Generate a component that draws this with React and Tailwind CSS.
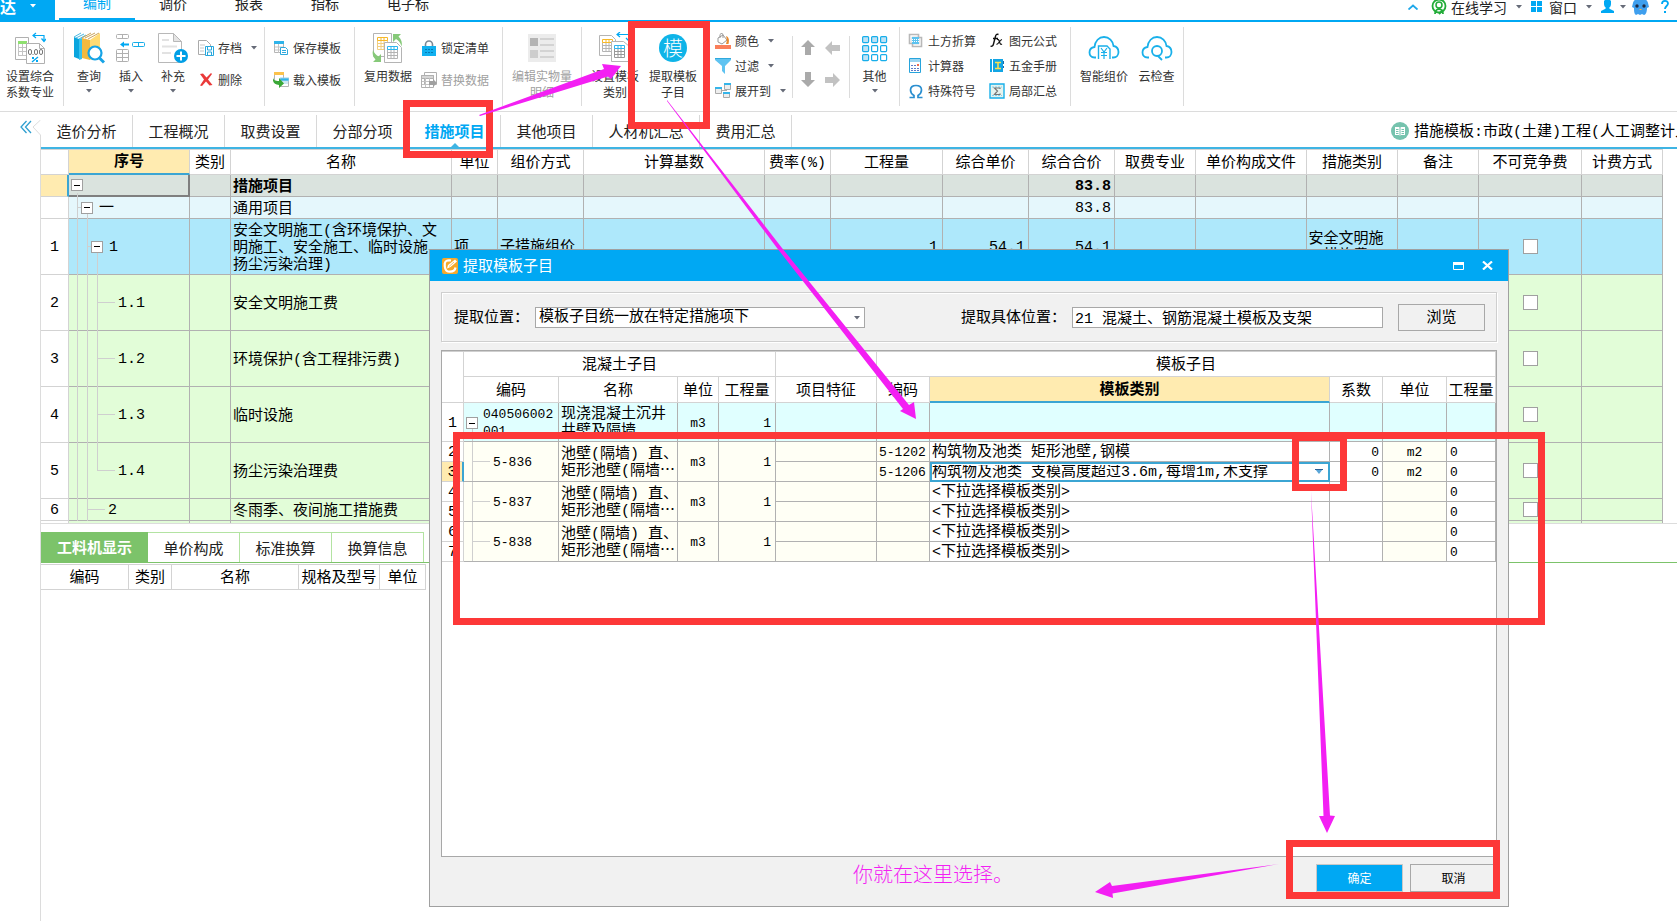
import React from "react";

const SONG = "font-['Liberation_Mono','Noto_Sans_CJK_SC',monospace]";

/* ---------- small shapes ---------- */

const Caret = ({ className = "" }) => (
  <svg width="6" height="4" viewBox="0 0 6 4" className={`shrink-0 ${className}`}>
    <path d="M0 0h6L3 3.6z" fill="currentColor" />
  </svg>
);

const RibbonDivider = () => <span className="my-[5px] w-px shrink-0 bg-[#dcdcdc]" />;
const ShortDivider = () => <span className="mt-[14px] mb-[13px] w-px shrink-0 bg-[#dcdcdc]" />;

/* ---------- ribbon icons, 32px ---------- */

const GridLines = ({ x, y, c = "#b4b4b4", head = "#b4b4b4", fill = "#fff" }) => (
  <g fill={fill} stroke={c}>
    <path d={`M${x} ${y + 3}h10v9h-10zM${x} ${y + 6}h10M${x} ${y + 9}h10M${x + 3.5} ${y}v12M${x + 6.5} ${y}v12`} />
    <path d={`M${x} ${y}h10v3h-10zM${x + 3.5} ${y}v3M${x + 6.5} ${y}v3`} stroke={head} />
  </g>
);

const IconCoefficient = () => (
  <svg width="32" height="32" viewBox="0 0 32 32" fill="none">
    <path d="M1.5 5.500h13v22h-13z" fill="#fff" stroke="#b0b0b0" />
    <path d="M4 9h9v3H4z" fill="#8fe070" />
    <path d="M4.500 12v12M8.500 12v12M4 15.500h9M4 19.500h9M4 23.500h9" stroke="#c4c4c4" />
    <path d="M12.500 11.500h13l5 5v15h-18z" fill="#fff" stroke="#b0b0b0" />
    <path d="M25.500 11.500v5h5" stroke="#b0b0b0" />
    <g stroke="#777">
      <rect x="14.500" y="17.500" width="3" height="5" rx="1.500" />
      <rect x="20.500" y="17.500" width="3" height="5" rx="1.500" />
      <rect x="25.500" y="17.500" width="3" height="5" rx="1.500" />
      <path d="M19 22v1" />
    </g>
    <path d="M18 30l6-5" stroke="#00a8f3" strokeWidth="1.300" />
    <path d="M18 25h2v2h-2zM22 28h2v2h-2z" fill="#00a8f3" />
    <path d="M19 3.500h11v5M22 1l-3 2.500L22 6M27.500 6.500l2.500 3 2.500-3" stroke="#00a8f3" strokeWidth="1.200" />
  </svg>
);

const IconQuery = () => (
  <svg width="32" height="32" viewBox="0 0 32 32" fill="none">
    <path d="M1 5l7-4 4 1v24l-5 2-6-2z" fill="#fff" />
    <path d="M1 5l5 2v20l-5-2z" fill="#0aa5de" />
    <path d="M6 7l3-1v21l-3 1z" fill="#36c2ef" />
    <path d="M1 5l7-4M3 6l8-4M6 7l7-4" stroke="#4ab9e2" />
    <path d="M9 6l8 2v20l-8-2z" fill="#f2b93e" />
    <path d="M17 8l10-7v24l-10 3z" fill="#ffdb73" />
    <path d="M9 6l9-5M12 6l10-5M15 7l11-6" stroke="#caa45a" />
    <circle cx="22" cy="21" r="6.500" fill="#fff" stroke="#16a3e6" strokeWidth="2.200" />
    <path d="M26.500 26l4.500 4.500" stroke="#16a3e6" strokeWidth="3" />
  </svg>
);

const IconInsert = () => (
  <svg width="32" height="32" viewBox="0 0 32 32" fill="none">
    <rect x="1.500" y="2.500" width="12" height="4" rx="1" stroke="#b0b0b0" />
    <path d="M7.500 3v3" stroke="#b0b0b0" />
    <rect x="17.500" y="10.500" width="12" height="4" rx="1" stroke="#15ade9" />
    <path d="M23.500 11v3" stroke="#15ade9" />
    <path d="M5 12.500l4-3v2h5v2H9v2z" fill="#00a8f3" />
    <rect x="1.500" y="17.500" width="12" height="12" rx="1" stroke="#b0b0b0" />
    <path d="M7.500 18v11M2 21.500h11M2 25.500h11" stroke="#b0b0b0" />
  </svg>
);

const IconSupplement = () => (
  <svg width="32" height="32" viewBox="0 0 32 32" fill="none">
    <path d="M1.500 1.500h15l8 8v21h-23z" fill="#fff" stroke="#b8b8b8" />
    <path d="M16.500 1.500l8 8h-8z" fill="#e4e4e4" stroke="#b8b8b8" />
    <path d="M5 8h7M5 14.500h15M5 21h9" stroke="#e2e2e2" strokeWidth="2" />
    <circle cx="24" cy="24" r="7" fill="#009fe6" />
    <path d="M24 19.500v9M19.500 24h9" stroke="#fff" strokeWidth="2" />
  </svg>
);

const IconReuse = () => (
  <svg width="32" height="32" viewBox="0 0 32 32" fill="none">
    <path d="M1.500 1.500h18v23h-18z" fill="#fff" stroke="#b4b4b4" />
    <GridLines x={5.5} y={5.5} head="#f7b928" c="#f2cf80" />
    <path d="M12.500 10.500h12l5 5v15h-17z" fill="#fff" stroke="#b4b4b4" />
    <GridLines x={15.500} y={14.500} head="#2eb5ee" />
    <path d="M21 2h8l-2.500 2.500c3 3 4 6 3 10-1-4-3-6-5.500-7.500L21 10z" fill="#86c979" />
    <path d="M1 18c1 3 3 5 5.500 6.500L9 22v8H1l2.500-2.500C1 25 0 22 1 18z" fill="#86c979" />
  </svg>
);

const IconEditDetail = () => (
  <svg width="32" height="32" viewBox="0 0 32 32">
    <path d="M2 2h28v28H2z" fill="#ececec" />
    <path d="M4 6h8v8H4z" fill="#b4b4b4" />
    <path d="M4 18h8v8H4z" fill="#cdcdcd" />
    <path d="M14 7h14M14 13h14M14 19h14M14 25h14" stroke="#cacaca" strokeWidth="1.600" />
  </svg>
);

const IconTemplateType = () => (
  <svg width="32" height="32" viewBox="0 0 32 32" fill="none">
    <path d="M.5 3.500h12l4 4v16H.5z" fill="#fff" stroke="#b4b4b4" />
    <GridLines x={3.500} y={7.500} head="#f7b928" />
    <path d="M12.500 9.500h12l6 5v15h-18z" fill="#fff" stroke="#b4b4b4" />
    <GridLines x={15.500} y={13.500} head="#2eb5ee" c="#999" />
    <path d="M18 2.500h12v6M21 0l-3 2.500L21 5M27 6l3 3 2.500-3" stroke="#00a8f3" strokeWidth="1.200" />
  </svg>
);

const IconOther = () => (
  <svg width="32" height="32" viewBox="0 0 32 32" stroke="#17aeea" strokeWidth="1.200">
    {[4.600, 13.600, 22.600].map((y, r) =>
      [3.600, 12.600, 21.600].map((x, c) => (
        <rect key={`${x}-${y}`} x={x} y={y} width="6" height="6" rx="1" fill={r === 0 || c === 0 ? "#bfe3f6" : "#fff"} />
      ))
    )}
  </svg>
);

const CLOUD = "M8 25.500H6.500C3 25.500 1.500 23 1.500 20.500c0-3 2-5 5-5.500C7 9 11 5 16 5s9 4 9.500 9c3 .5 5 3 5 6 0 3-2 5.500-5 5.500H24";

const IconSmartPrice = () => (
  <svg width="32" height="32" viewBox="0 0 32 32" fill="none" stroke="#19b0ea" strokeWidth="1.800">
    <path d={CLOUD} />
    <path d="M10.500 27V14h8.500l3 3v10" strokeWidth="1.400" />
    <path d="M13 16l3 4 3-4M16 20v7M13 20.500h6M13 23.500h6" strokeWidth="1.200" />
  </svg>
);

const IconCloudCheck = () => (
  <svg width="32" height="32" viewBox="0 0 32 32" fill="none" stroke="#19b0ea" strokeWidth="1.800">
    <path d={CLOUD} />
    <circle cx="16" cy="19" r="5" />
    <path d="M17 24l4 4" />
  </svg>
);

/* ---------- ribbon icons, 16px ---------- */

const Svg16 = ({ children }) => (
  <svg width="16" height="16" viewBox="0 0 16 16" fill="none" className="shrink-0">
    {children}
  </svg>
);

const icons16 = {
  archive: (
    <Svg16>
      <path d="M.5.500h8l4 4v10H.5z" fill="#fff" stroke="#aaa" />
      <path d="M2 5h5M2 8h4M2 11h4" stroke="#c5c5c5" />
      <path d="M7.500 6.500h8v9h-8z" fill="#fff" stroke="#27a8dd" />
      <path d="M9.500 7v3h4V7M9.500 15v-3h4v3" stroke="#27a8dd" />
    </Svg16>
  ),
  remove: (
    <Svg16>
      <path d="M2 2l3-.5 3.500 4L13 1l1 1-4 5.500L14.500 13l-3 .5-3.500-4L4 14l-2-.5 4-6z" fill="#ea3a3a" />
    </Svg16>
  ),
  save: (
    <Svg16>
      <path d="M1.500 1.500h9v11h-9z" fill="#fff" stroke="#b5b5b5" />
      <path d="M1 1h10v3H1z" fill="#2fb4ea" />
      <path d="M2 7h8M2 10h8M5.500 4v9" stroke="#c5c5c5" />
      <path d="M7.500 7.500h5l2 2v5h-7z" fill="#fff" stroke="#2fa9dd" />
      <path d="M9 10.500h4M9 12.500h4" stroke="#2fa9dd" />
    </Svg16>
  ),
  load: (
    <Svg16>
      <path d="M1.500 1.500h9v9h-9z" fill="#fff" stroke="#b5b5b5" />
      <path d="M1 0h10v3H1z" fill="#fbc24c" />
      <path d="M7.500 6.500h8v8h-8z" fill="#fff" stroke="#b5b5b5" />
      <path d="M7 6h9v3H7zM9 11h6" fill="#2fb4ea" stroke="#9ccfe6" />
      <path d="M0 5c0 3 2 4 6 4V6l5 5.500L6 16v-3c-5 0-7-4-6-8z" fill="#3aa837" />
    </Svg16>
  ),
  lock: (
    <Svg16>
      <path d="M4.500 8V4.500a3.500 3.500 0 017 0V8" stroke="#7b8894" strokeWidth="1.600" />
      <path d="M1 6h14v10H1z" fill="#12b1f0" />
      <path d="M4 9.500h8M4 12.500h8" stroke="#067bb5" strokeDasharray="2 1" />
    </Svg16>
  ),
  replace: (
    <Svg16>
      <path d="M3.500.500h12v12h-12zM.5 3.500h12v12H.5z" fill="#fff" stroke="#b0b0b0" />
      <path d="M.5 3.500h12v3H.5z" fill="#d6d6d6" stroke="#b0b0b0" />
      <path d="M1 9.500h11M1 12.500h11M4.500 6v9M8.500 6v9" stroke="#c2c2c2" />
      <path d="M8 9h4V7l4 4-4 4v-2H8z" fill="#a0a0a0" />
    </Svg16>
  ),
  color: (
    <Svg16>
      <path d="M3 5l5-3 4 5-5 4-4-2z" fill="#fff" stroke="#999" />
      <path d="M5 5V1.500C6 0 8 0 8 2v3" stroke="#999" />
      <path d="M11 3c3 1 3.500 4 2.500 8H11c1-3 1-5 0-8z" fill="#e88b2e" />
      <path d="M0 12h16v4H0z" fill="#fa7f5a" />
    </Svg16>
  ),
  filter: (
    <Svg16>
      <path d="M0 0h16v2l-6 6v8l-3-3V8L0 2z" fill="#5fc3f1" />
      <path d="M0 0h16v1H0z" fill="#2fa9dd" />
    </Svg16>
  ),
  expand: (
    <Svg16>
      <path d="M.5 4.500h6v6h-6zM9.500 1.500h6v5h-6zM8.500 9.500h6v5h-6z" fill="#eee" stroke="#aaa" />
      <path d="M0 4h7v2H0zM9 0h7v2H9zM8 9h7v2H8z" fill="#35b5ea" />
      <path d="M7 7.500h5" stroke="#aaa" />
    </Svg16>
  ),
  earth: (
    <Svg16>
      <path d="M1.500 1.500h9v9h-9z" stroke="#b8b8b8" strokeWidth="1.600" />
      <path d="M4.500 4.500h9v9h-9z" stroke="#b8b8b8" strokeWidth="1.600" />
      <path d="M4 4h7v7H4z" fill="#5cc3f0" />
      <path d="M4 6.500h7M4 8.500h7" stroke="#fff" strokeDasharray="1 1" />
    </Svg16>
  ),
  calc: (
    <Svg16>
      <path d="M1.500.500h11v14h-11z" fill="#fff" stroke="#27a4dc" />
      <path d="M2 1h10v3H2z" fill="#9bd6f2" />
      <path d="M3 7.500h8M3 10.500h8M3 12.500h8" stroke="#5e7cc8" strokeDasharray="2 1" />
      <path d="M9 6h2v2H9z" fill="#f26b4f" />
    </Svg16>
  ),
  omega: (
    <Svg16>
      <path d="M1.500 14.500h4.500v-2C3.500 11 2.500 9 2.500 7 2.500 4 5 2.500 8 2.500s5.500 1.500 5.500 4.500c0 2-1 4-3.500 5.500v2h4.500" stroke="#2b8fd0" strokeWidth="1.700" />
    </Svg16>
  ),
  fx: (
    <Svg16>
      <path d="M9.500 1.500C7.500.500 6.800 2 6.300 4L4.500 11c-.5 2-1.500 2.800-3 2M4 5.500h5" stroke="#111" strokeWidth="1.400" />
      <path d="M8 6.500c2-.5 2 1 2.500 2.500S11.500 12 13 11M13 6.500C11 7 10 10.500 7.500 11.500" stroke="#111" strokeWidth="1.200" />
    </Svg16>
  ),
  manual: (
    <Svg16>
      <path d="M1 1h13v13H1z" fill="#12a5e4" />
      <path d="M3.500 1v13M1 14.500h12" stroke="#fff" />
      <path d="M6 4.500h6M9 4.500v6M6 10.500h6" stroke="#ffe14a" strokeWidth="1.500" />
      <path d="M14 3h1v3h-1zM14 8h1v2h-1z" fill="#1769a8" />
    </Svg16>
  ),
  sum: (
    <Svg16>
      <path d="M1 1h14v14H1z" fill="#e6f3ee" stroke="#19b0ea" strokeWidth="1.400" />
      <path d="M3 4h10M3 12.500h10" stroke="#7fd0ef" strokeDasharray="2 1" />
      <path d="M11 6V5H5.500l3 3-3 3.500H11v-1" stroke="#777" strokeWidth="1.200" />
    </Svg16>
  ),
};

/* ---------- ribbon ---------- */

const BigButton = ({ icon, lines, caret, muted, className }) => (
  <button className={`flex shrink-0 flex-col items-center pt-[10px] text-xs leading-4 ${muted ? "text-[#a0a0a0]" : "text-[#333]"} ${className}`}>
    {icon}
    <span className="mt-1 whitespace-nowrap">
      {lines.map((l) => (
        <span key={l} className="block">{l}</span>
      ))}
    </span>
    {caret && <Caret className="mt-[5px] text-[#666b78]" />}
  </button>
);

const SmallButton = ({ icon, label, caret, muted }) => (
  <button className={`flex h-4 items-center gap-1 whitespace-nowrap text-xs leading-4 ${muted ? "text-[#a0a0a0]" : "text-[#333]"}`}>
    {icons16[icon]}
    <span>{label}</span>
    {caret && <Caret className="ml-[5px] text-[#666b78]" />}
  </button>
);

const TwoRows = ({ children, className = "" }) => (
  <div className={`flex shrink-0 flex-col gap-4 pt-[18px] ${className}`}>{children}</div>
);

const ThreeRows = ({ children, className = "" }) => (
  <div className={`flex shrink-0 flex-col gap-[9px] pt-[11px] ${className}`}>{children}</div>
);

const MoveArrow = ({ d, label, color }) => (
  <button aria-label={label} className="flex size-4 items-center justify-center">
    <svg width="16" height="16" viewBox="0 0 16 16">
      <path d={d} fill={color} />
    </svg>
  </button>
);

const Ribbon = () => (
  <div className="flex h-[90px] border-b border-[#dcdcdc] bg-white">
    <BigButton className="w-[63px] pr-[3px]" icon={<IconCoefficient />} lines={["设置综合", "系数专业"]} />
    <RibbonDivider />
    <BigButton className="ml-1 w-[42px]" icon={<IconQuery />} lines={["查询"]} caret />
    <BigButton className="w-[42px]" icon={<IconInsert />} lines={["插入"]} caret />
    <BigButton className="w-[42px]" icon={<IconSupplement />} lines={["补充"]} caret />
    <TwoRows className="w-[70px] pl-1">
      <SmallButton icon="archive" label="存档" caret />
      <SmallButton icon="remove" label="删除" />
    </TwoRows>
    <RibbonDivider />
    <TwoRows className="w-[89px] pl-2">
      <SmallButton icon="save" label="保存模板" />
      <SmallButton icon="load" label="载入模板" />
    </TwoRows>
    <RibbonDivider />
    <BigButton className="w-[66px]" icon={<IconReuse />} lines={["复用数据"]} />
    <TwoRows className="w-[81px]">
      <SmallButton icon="lock" label="锁定清单" />
      <SmallButton icon="replace" label="替换数据" muted />
    </TwoRows>
    <RibbonDivider />
    <BigButton className="w-[78px]" icon={<IconEditDetail />} lines={["编辑实物量", "明细"]} muted />
    <RibbonDivider />
    <BigButton className="w-[66px]" icon={<IconTemplateType />} lines={["设置模板", "类别"]} />
    <BigButton
      className="w-[50px]"
      icon={
        <span className="my-[2px] flex size-7 items-center justify-center rounded-full bg-[#0fb4e8] text-xl leading-7 font-light text-white">模</span>
      }
      lines={["提取模板", "子目"]}
    />
    <ThreeRows className="w-[94px] pl-[17px]">
      <SmallButton icon="color" label="颜色" caret />
      <SmallButton icon="filter" label="过滤" caret />
      <SmallButton icon="expand" label="展开到" caret />
    </ThreeRows>
    <ShortDivider />
    <div className="grid w-14 shrink-0 grid-cols-[16px_16px] content-start gap-x-[9px] gap-y-4 pt-[18px] pl-[7px]">
      <MoveArrow label="上移" color="#aaa" d="M8 0l7 7h-4v8H5V7H1z" />
      <MoveArrow label="左移" color="#c2c2c2" d="M0 8l7-7v4h8v6H7v4z" />
      <MoveArrow label="下移" color="#aaa" d="M8 15l7-7h-4V0H5v8H1z" />
      <MoveArrow label="右移" color="#c2c2c2" d="M15 8L8 1v4H0v6h8v4z" />
    </div>
    <ShortDivider />
    <BigButton className="w-[49px]" icon={<IconOther />} lines={["其他"]} caret />
    <RibbonDivider />
    <ThreeRows className="w-[81px] pl-2">
      <SmallButton icon="earth" label="土方折算" />
      <SmallButton icon="calc" label="计算器" />
      <SmallButton icon="omega" label="特殊符号" />
    </ThreeRows>
    <ThreeRows className="w-[89px] pl-2">
      <SmallButton icon="fx" label="图元公式" />
      <SmallButton icon="manual" label="五金手册" />
      <SmallButton icon="sum" label="局部汇总" />
    </ThreeRows>
    <RibbonDivider />
    <BigButton className="ml-[6px] w-[54px]" icon={<IconSmartPrice />} lines={["智能组价"]} />
    <BigButton className="mr-[1px] w-[51px]" icon={<IconCloudCheck />} lines={["云检查"]} />
    <RibbonDivider />
  </div>
);

/* ---------- title row ---------- */

const menus = ["编制", "调价", "报表", "指标", "电子标"];

const MenuBar = () => (
  <header className="-mt-[14px] flex h-9 border-b-2 border-[#00a8f3] bg-white text-sm leading-5 text-[#222]">
    <button className="flex h-9 w-[55px] shrink-0 items-center gap-[14px] bg-[#00a8f3] pt-1 text-base font-bold text-white">
      达
      <Caret className="text-white" />
    </button>
    <nav className="ml-1 flex">
      {menus.map((m, i) => (
        <button key={m} className={i === 0 ? "w-[76px] border-b-2 border-[#00a8f3] text-[#00a8f3]" : i === 4 ? "w-[90px]" : "w-[76px]"}>
          {m}
        </button>
      ))}
    </nav>
    <div className="ml-auto flex h-[27px] items-center self-end whitespace-nowrap pr-2">
      <button aria-label="收起" className="mr-[13px]">
        <svg width="10" height="6" viewBox="0 0 10 6" fill="none">
          <path d="M.5 5.500L5 1.500l4.500 4" stroke="#1ea8ea" strokeWidth="1.800" />
        </svg>
      </button>
      <button className="flex items-center gap-1">
        <svg width="16" height="16" viewBox="0 0 16 16" fill="none">
          <circle cx="8" cy="7" r="6.500" stroke="#22ac38" strokeWidth="1.800" />
          <circle cx="8" cy="6" r="3" stroke="#22ac38" strokeWidth="1.500" />
          <path d="M4 15c0-3 2-5 4-5s4 2 4 5M8 15l4-4" stroke="#22ac38" strokeWidth="1.800" />
        </svg>
        在线学习
      </button>
      <Caret className="ml-[9px] text-[#666b78]" />
      <button className="ml-[9px] flex items-center gap-[7px]">
        <svg width="11" height="11" viewBox="0 0 11 11">
          <path d="M0 0h5v5H0zM6 0h5v5H6zM0 6h5v5H0zM6 6h5v5H6z" fill="#00a8f3" />
        </svg>
        窗口
      </button>
      <Caret className="ml-[9px] text-[#666b78]" />
      <button aria-label="用户" className="ml-[9px]">
        <svg width="13" height="14" viewBox="0 0 13 14" fill="#00a8f3">
          <path d="M3 1c1-2 6-2 7 0v3c0 2-1 3-2 4l1 1 4 2v2H0v-2l4-2 1-1C4 7 3 6 3 4z" />
        </svg>
      </button>
      <Caret className="ml-[6px] text-[#666b78]" />
      <button aria-label="助手" className="ml-[6px]">
        <svg width="17" height="16" viewBox="0 0 17 16">
          <path d="M1 4C2 0 5 0 8.500 0S15 0 16 4l1 4-2 1c0 3-1 7-3 7l-2-1-2 1-2-1-2 1c-2-1-2-4-2-7L0 8z" fill="#3f9fee" />
          <circle cx="5" cy="7" r="1.700" fill="#1e2b45" />
          <circle cx="12" cy="7" r="1.700" fill="#1e2b45" />
          <path d="M7.500 10.500h2" stroke="#f7b54a" />
        </svg>
      </button>
      <button aria-label="帮助" className="ml-3">
        <svg width="8" height="13" viewBox="0 0 8 13" fill="none">
          <path d="M1 4c0-4 6-4 6-.5C7 6 4 6 4 9" stroke="#00a8f3" strokeWidth="1.800" />
          <path d="M3 11h2v2H3z" fill="#00a8f3" />
        </svg>
      </button>
    </div>
  </header>
);

/* ---------- page tabs ---------- */

const pageTabs = ["造价分析", "工程概况", "取费设置", "分部分项", "措施项目", "其他项目", "人材机汇总", "费用汇总"];

const PageTabs = () => (
  <div className="flex h-[37px] border-b-2 border-[#3fb4e3] text-[15px] leading-5 text-[#222]">
    <nav className="flex pt-[3px]">
      {pageTabs.map((t) => (
        <button
          key={t}
          className={`relative shrink-0 whitespace-nowrap border-r border-[#d8d8d8] ${t.length > 4 ? "w-[107px]" : "w-[92px]"} ${
            t === "措施项目" ? "font-bold text-[#00a8f3]" : ""
          }`}
        >
          {t}
          {t === "措施项目" && (
            <svg width="8" height="4" viewBox="0 0 8 4" className="absolute bottom-0 left-[42px]">
              <path d="M4 0l4 4H0z" fill="#3fb4e3" />
            </svg>
          )}
        </button>
      ))}
    </nav>
    <div className={`ml-auto flex w-[286px] items-center gap-[5px] overflow-hidden whitespace-nowrap pt-[3px] text-black ${SONG}`}>
      <svg width="18" height="18" viewBox="0 0 18 18" fill="none" className="shrink-0">
        <circle cx="9" cy="9" r="9" fill="#76c3ae" />
        <path d="M4 5h4l1 .5 1-.5h4v8h-4l-1 .5-1-.5H4z" fill="#fff" />
        <path d="M9 5v8M5 7.500h2.500M5 9.500h2.500M5 11.500h2.500M10.500 7.500H13M10.500 9.500H13M10.500 11.500H13" stroke="#76c3ae" />
      </svg>
      <span className="pt-1">措施模板:市政(土建)工程(人工调整计入</span>
    </div>
  </div>
);

/* ---------- main sheet ---------- */

const columns = [
  ["", "w-[28px]"],
  ["序号", "w-[121px]"],
  ["类别", "w-[41px]"],
  ["名称", "w-[221px]"],
  ["单位", "w-[46px]"],
  ["组价方式", "w-[86px]"],
  ["计算基数", "w-[181px]"],
  ["费率(%)", "w-[66px]"],
  ["工程量", "w-[112px]"],
  ["综合单价", "w-[86px]"],
  ["综合合价", "w-[86px]"],
  ["取费专业", "w-[81px]"],
  ["单价构成文件", "w-[111px]"],
  ["措施类别", "w-[91px]"],
  ["备注", "w-[81px]"],
  ["不可竞争费", "w-[103px]"],
  ["计费方式", "w-[81px]"],
];

const rows = [
  { bg: "bg-[#dae3de]", h: "h-[22px]", size: 22, box: "ml-[2px]", guides: "M8.500 18v4", name: "措施项目", total: "83.8", bold: true, selected: true },
  { bg: "bg-[#e5f7fc]", h: "h-[22px]", size: 22, box: "ml-[12px]", code: "一", guides: "M8.500 0v22M9 10.500h3M18.500 17v5", name: "通用项目", total: "83.8" },
  {
    no: 1,
    bg: "bg-[#aee8fb]",
    h: "h-[56px]",
    size: 56,
    box: "ml-[22px]",
    code: "1",
    guides: "M8.500 0v56M18.500 0v56M19 27.500h3M28.500 34v22",
    name: "安全文明施工(含环境保护、文明施工、安全施工、临时设施、扬尘污染治理)",
    unit: "项",
    method: "子措施组价",
    qty: "1",
    price: "54.1",
    total: "54.1",
    kind: ["安全文明施", "措施费"],
    check: true,
  },
  { no: 2, code: "1.1", pad: "pl-[49px]", guides: "M8.500 0v56M18.500 0v56M28.500 0v56M29 27.500h17", name: "安全文明施工费" },
  { no: 3, code: "1.2", pad: "pl-[49px]", guides: "M8.500 0v56M18.500 0v56M28.500 0v56M29 27.500h17", name: "环境保护(含工程排污费)" },
  { no: 4, code: "1.3", pad: "pl-[49px]", guides: "M8.500 0v56M18.500 0v56M28.500 0v56M29 27.500h17", name: "临时设施" },
  { no: 5, code: "1.4", pad: "pl-[49px]", guides: "M8.500 0v56M18.500 0v56M28.500 0v28M28 27.500h18", name: "扬尘污染治理费" },
  { no: 6, h: "h-[22px]", size: 22, code: "2", pad: "pl-[39px]", guides: "M8.500 0v22M18.500 0v22M19 10.500h17", name: "冬雨季、夜间施工措施费" },
].map((r) => ({ bg: "bg-[#e2fdd8]", h: "h-[56px]", size: 56, check: r.no > 0, ...r }));

const FoldBox = ({ className = "" }) => (
  <button aria-label="折叠" className={`relative flex size-3 shrink-0 items-center justify-center border border-[#a0a0a0] bg-white ${className}`}>
    <span className="h-px w-1.5 bg-black" />
  </button>
);

const SheetRow = ({ row }) => {
  const bare = `border-r border-b border-[#b1b1b1] p-0 ${row.bg}`;
  const cell = `${bare} pt-[3px]`;
  return (
    <tr className={row.h}>
      <td className={`border-r border-b border-[#d3d3d3] p-0 pt-[3px] text-center ${row.selected ? "border-r-2 border-r-[#3ba5d3] bg-[#ffebb0]" : "bg-white"}`}>{row.no}</td>
      <td className={`${bare} relative ${row.selected ? "border-r-2 border-b-2 border-r-[#7f7f7f] border-b-[#7f7f7f]" : ""}`}>
        <svg width="50" height={row.size} viewBox={`0 0 50 ${row.size}`} className="absolute top-0 left-0">
          <path d={row.guides} stroke="#cfcfcf" fill="none" />
        </svg>
        <span className={`flex items-center gap-[6px] ${row.pad || ""}`}>
          {row.box && <FoldBox className={row.box} />}
          {row.code && <span className="pt-[3px]">{row.code}</span>}
        </span>
      </td>
      <td className={cell} />
      <td className={`${cell} pl-[2px] ${row.bold ? "font-bold" : ""}`}>
        <span className="block leading-[17px]">{row.name}</span>
      </td>
      <td className={`${cell} pl-[2px]`}>{row.unit}</td>
      <td className={`${cell} pl-[2px]`}>{row.method}</td>
      <td className={cell} />
      <td className={cell} />
      <td className={`${cell} pr-1 text-right`}>{row.qty}</td>
      <td className={`${cell} pr-[3px] text-right`}>{row.price}</td>
      <td className={`${cell} pr-[3px] text-right ${row.bold ? "font-bold" : ""}`}>{row.total}</td>
      <td className={cell} />
      <td className={cell} />
      <td className={`${cell} pr-3 text-center leading-[17px]`}>
        {row.kind && row.kind.map((k) => <span key={k} className="block">{k}</span>)}
      </td>
      <td className={cell} />
      <td className={bare}>
        {row.check && (
          <input type="checkbox" aria-label={`不可竞争费 ${row.no}`} className="mx-auto block size-[15px] appearance-none border border-[#a0a0a0] bg-white" />
        )}
      </td>
      <td className={cell} />
    </tr>
  );
};

const Sheet = () => (
  <div className="border-b border-[#dcdcdc] pr-[14px]">
    <table className={`w-full table-fixed border-separate border-spacing-0 text-[15px] leading-[18px] text-black ${SONG}`}>
      <colgroup>
        {columns.map(([name, w]) => (
          <col key={name} className={w} />
        ))}
      </colgroup>
      <thead>
        <tr className="h-[26px]">
          {columns.map(([name]) => (
            <th
              key={name}
              className={`whitespace-nowrap border-t border-r border-b border-[#d3d3d3] p-0 pt-[3px] ${
                name === "序号" ? "border-b-2 border-b-[#3ba5d3] bg-[#ffebb0] font-bold" : "font-normal"
              }`}
            >
              {name}
            </th>
          ))}
        </tr>
      </thead>
      <tbody>
        {rows.map((r) => (
          <SheetRow key={r.name} row={r} />
        ))}
        <tr className="h-[2px]">
          {columns.map(([name], i) => (
            <td key={name} className={`border-r p-0 ${i === 0 ? "border-[#d3d3d3]" : "border-[#b1b1b1] bg-[#e2fdd8]"}`} />
          ))}
        </tr>
      </tbody>
    </table>
  </div>
);

/* ---------- lower panel ---------- */

const LowerPanel = () => (
  <section className="pt-2">
    <nav className="flex h-[31px] border-b border-[#7cc36a] text-[15px] leading-5 text-[#222]">
      <button className="w-[107px] shrink-0 bg-[#7cc36a] font-bold text-white">工料机显示</button>
      {["单价构成", "标准换算", "换算信息"].map((t) => (
        <button key={t} className="w-[92px] shrink-0 border-t border-r border-[#b3e3a2]">
          {t}
        </button>
      ))}
    </nav>
    <table className={`mt-px w-[385px] table-fixed border-separate border-spacing-0 text-[15px] leading-[18px] text-black ${SONG}`}>
      <thead>
        <tr className="h-[26px]">
          {[
            ["编码", "w-[88px]"],
            ["类别", "w-[43px]"],
            ["名称", "w-[127px]"],
            ["规格及型号", "w-[81px]"],
            ["单位", "w-[46px]"],
          ].map(([name, w]) => (
            <th key={name} className={`${w} whitespace-nowrap border-t border-r border-b border-[#d3d3d3] p-0 pt-[3px] font-normal`}>
              {name}
            </th>
          ))}
        </tr>
      </thead>
    </table>
  </section>
);

/* ---------- dialog ---------- */

const items = [
  { code: "5-836", picks: [["5-1202", "构筑物及池类 矩形池壁,钢模"], ["5-1206", "构筑物及池类 支模高度超过3.6m,每增1m,木支撑"]] },
  { code: "5-837", picks: [["", "<下拉选择模板类别>"], ["", "<下拉选择模板类别>"]] },
  { code: "5-838", picks: [["", "<下拉选择模板类别>"], ["", "<下拉选择模板类别>"]] },
];

const dialogCols = [
  "w-[22px]", "w-[95px]", "w-[119px]", "w-[41px]", "w-[57px]", "w-[101px]",
  "w-[53px]", "w-[400px]", "w-[53px]", "w-[64px]", "w-[49px]",
];

const DialogTable = () => {
  const head = "whitespace-nowrap border-r border-b border-[#d3d3d3] p-0 pt-[3px]";
  const line = "border-r border-b border-[#b1b1b1] p-0 pt-[2px]";
  const num = "text-[13px]";
  return (
    <table className={`w-full table-fixed border-separate border-spacing-0 text-[15px] leading-[17px] text-black ${SONG}`}>
      <colgroup>
        {dialogCols.map((w, i) => (
          <col key={i} className={w} />
        ))}
      </colgroup>
      <thead>
        <tr className="h-[25px]">
          <th rowSpan={2} className={head} />
          <th colSpan={4} className={`${head} font-normal`}>混凝土子目</th>
          <th className={head} />
          <th colSpan={5} className={`${head} font-normal`}>模板子目</th>
        </tr>
        <tr className="h-[26px]">
          {["编码", "名称", "单位", "工程量", "项目特征", "编码", "模板类别", "系数", "单位", "工程量"].map((t, i) => (
            <th key={i} className={`${head} ${t === "模板类别" ? "border-b-2 border-b-[#3ba5d3] bg-[#ffebb0] font-bold" : "font-normal"}`}>
              {t}
            </th>
          ))}
        </tr>
      </thead>
      <tbody>
        <tr className="h-[39px] bg-[#e0ffff]">
          <td className="border-r border-b border-[#d3d3d3] bg-white p-0 pt-[2px] text-center">1</td>
          <td className={`${line} relative`}>
            <svg width="20" height="38" viewBox="0 0 20 38" className="absolute top-0 left-0">
              <path d="M8.500 25v13" stroke="#cfcfcf" />
            </svg>
            <span className={`flex items-center gap-[5px] pl-[2px] ${num}`}>
              <FoldBox />
              <span>040506002<br />001</span>
            </span>
          </td>
          <td className={`${line} pl-[2px]`}>现浇混凝土沉井<br />井壁及隔墙</td>
          <td className={`${line} text-center ${num}`}>m3</td>
          <td className={`${line} pr-1 text-right ${num}`}>1</td>
          {[0, 1, 2, 3, 4, 5].map((i) => (
            <td key={i} className={line} />
          ))}
        </tr>
        {items.map((item, n) =>
          item.picks.map(([code, kind], k) => {
            const active = code === "5-1206";
            return (
              <tr key={`${n}${k}`} className="h-5">
                <td className={`border-r border-b border-[#d3d3d3] p-0 pt-[2px] text-center ${active ? "border-r-2 border-r-[#3ba5d3] bg-[#ffebb0]" : ""}`}>
                  {n * 2 + k + 2}
                </td>
                {k === 0 && (
                  <>
                    <td rowSpan={2} className={`${line} relative bg-[#fffff5] pl-[29px] ${num}`}>
                      <svg width="28" height="39" viewBox="0 0 28 39" className="absolute top-0 left-0">
                        <path d="M8.500 0v39M9 19.500h17" stroke="#cfcfcf" />
                      </svg>
                      {item.code}
                    </td>
                    <td rowSpan={2} className={`${line} overflow-hidden whitespace-nowrap bg-[#fffff5] pl-[2px]`}>
                      池壁(隔墙) 直、<br />矩形池壁(隔墙⋯
                    </td>
                    <td rowSpan={2} className={`${line} bg-[#fffff5] text-center ${num}`}>m3</td>
                    <td rowSpan={2} className={`${line} bg-[#fffff5] pr-1 text-right ${num}`}>1</td>
                  </>
                )}
                <td className={`${line} bg-[#fffff5]`} />
                <td className={`${line} bg-[#fffff5] pl-[2px] ${num}`}>{code}</td>
                {active ? (
                  <td className="relative border-2 border-[#3ba5d3] p-0">
                    <select aria-label="模板类别" className="block h-4 w-full appearance-none bg-white pt-px leading-[15px]">
                      <option>{kind}</option>
                    </select>
                    <svg width="8" height="6" viewBox="0 0 8 6" className="pointer-events-none absolute top-[5px] right-[5px]">
                      <path d="M0 0h8L4 5z" fill="#5aa6d8" />
                      <path d="M0 0h8v1H0z" fill="#2b5f96" />
                    </svg>
                  </td>
                ) : (
                  <td className={`${line} whitespace-nowrap pl-[2px]`}>{kind}</td>
                )}
                <td className={`${line} pr-[3px] text-right ${num}`}>{code && "0"}</td>
                <td className={`${line} bg-[#fffff5] text-center ${num}`}>{code && "m2"}</td>
                <td className={`${line} pl-[3px] ${num}`}>0</td>
              </tr>
            );
          })
        )}
      </tbody>
    </table>
  );
};

const TemplateDialog = () => (
  <div
    role="dialog"
    aria-label="提取模板子目"
    className={`absolute top-[249px] left-[429px] flex h-[658px] w-[1080px] flex-col border border-[#a0a0a0] bg-[#f1f1f1] text-[15px] leading-5 text-black ${SONG}`}
  >
    <div className="flex h-[31px] shrink-0 items-center bg-[#00a8f3] pr-[15px] pl-3 text-white">
      <svg width="16" height="16" viewBox="0 0 16 16" fill="none">
        <rect width="16" height="16" rx="2" fill="#f6a92c" />
        <path d="M9 2.500C5 2 3 3 2.800 5.500 2.500 8 3 13 6 13.500c4 .5 7-.5 7.500-4" stroke="#fff" strokeWidth="2.200" />
        <path d="M5 10.500l1-3.500 7-5.500 2 2L8.500 9z" fill="#fff" />
        <path d="M7 8.500l5-4.500" stroke="#f6a92c" strokeWidth=".7" />
      </svg>
      <h2 className="ml-[5px] pt-1">提取模板子目</h2>
      <button aria-label="最大化" className="ml-auto">
        <svg width="11" height="8" viewBox="0 0 11 8" fill="none">
          <path d="M.5.500h10v7H.5z" stroke="#fff" />
          <path d="M0 0h11v3H0z" fill="#fff" />
        </svg>
      </button>
      <button aria-label="关闭" className="ml-[18px]">
        <svg width="11" height="9" viewBox="0 0 11 9" fill="none">
          <path d="M1 .5l9 8M10 .5l-9 8" stroke="#fff" strokeWidth="2.200" />
        </svg>
      </button>
    </div>

    <div className="mx-[11px] mt-[11px] flex h-[50px] shrink-0 items-center border border-[#cfcfcf] pr-[11px] pl-3 shadow-[1px_1px_0_#fff,inset_1px_1px_0_#fff]">
      <label htmlFor="place" className="w-[81px] whitespace-nowrap pt-[3px]">提取位置：</label>
      <div className="relative">
        <select id="place" className="block h-[21px] w-[330px] appearance-none border border-[#a8a8a8] bg-white pl-[3px] leading-[19px]">
          <option>模板子目统一放在特定措施项下</option>
        </select>
        <Caret className="pointer-events-none absolute top-[9px] right-[5px] text-[#666b78]" />
      </div>
      <label htmlFor="target" className="ml-auto w-[111px] whitespace-nowrap pt-[3px]">提取具体位置：</label>
      <input
        id="target"
        type="text"
        defaultValue="21 混凝土、钢筋混凝土模板及支架"
        className="h-[21px] w-[311px] border border-[#a8a8a8] bg-white pl-[2px] leading-[19px]"
      />
      <button className="ml-[15px] h-[27px] w-[87px] border border-[#a8a8a8] pt-[3px]">浏览</button>
    </div>

    <div className="mx-[11px] mt-2 min-h-0 flex-1 border border-[#a8a8a8] bg-white">
      <div className="border-t border-[#cfcfcf]">
        <DialogTable />
      </div>
    </div>

    <div className="flex h-[49px] shrink-0 items-start justify-end gap-[7px] pt-[7px] pr-[11px] font-['Noto_Sans_CJK_SC',sans-serif] text-xs">
      <button className="h-7 w-[87px] border border-[#c8c8c8] bg-[#00a8f3] text-white">确定</button>
      <button className="h-7 w-[87px] border border-[#a8a8a8]">取消</button>
    </div>
  </div>
);

/* ---------- hand-drawn marks over the windows ---------- */

const Marks = () => (
  <>
    <svg width="1677" height="921" viewBox="0 0 1677 921" className="pointer-events-none absolute top-0 left-0">
      <g fill="none" stroke="#fd3838" strokeWidth="7">
        <path d="M406.500 103.500h83v51h-83z" />
        <path d="M631.500 24.500h75v101h-75z" />
        <path d="M456.500 435.500h1085v186h-1085z" />
        <path d="M1295.500 437.500h48v50h-48z" />
        <path d="M1289.500 843.500h207v52h-207z" />
      </g>
      <g fill="#f31ff3">
        <path d="M479 115L604 69 602 64 621 66 611 79 608 76.500 480 116z" />
        <path d="M667 100L782 248 909 405 914 402 916 419 900 411 903 409 777 248 667 101z" />
        <path d="M1311 491L1330 815.500 1335 816 1327 833 1319 816 1323.500 816z" />
        <path d="M1279 864L1112 886 1110 882 1095 892 1113 898 1112.500 893.500z" />
      </g>
    </svg>
    <p className="pointer-events-none absolute top-[860px] left-[853px] whitespace-nowrap font-['Noto_Sans_CJK_SC',sans-serif] text-xl leading-7 font-light text-[#f31ff3]">
      你就在这里选择。
    </p>
  </>
);

export default function App() {
  return (
    <div className="relative flex min-h-screen flex-col overflow-hidden bg-white font-['Noto_Sans_CJK_SC',sans-serif]">
      <MenuBar />
      <Ribbon />
      <div className="flex flex-1">
        <aside className="flex w-[41px] shrink-0 flex-col">
          <button aria-label="展开导航" className="mt-[8px] ml-5 h-[19px]">
            <svg width="21" height="19" viewBox="0 0 21 19" fill="none">
              <path d="M6.500 1L1 7l5.500 6M11 1L5.500 7l5.500 6" stroke="#2f9fd0" strokeWidth="1.300" />
              <path d="M20.500 0L13 7l7.500 8v4" stroke="#dcdcdc" />
            </svg>
          </button>
          <span className="w-full flex-1 border-r border-[#dcdcdc]" />
        </aside>
        <main className="min-w-0 flex-1">
          <PageTabs />
          <Sheet />
          <LowerPanel />
        </main>
      </div>
      <TemplateDialog />
      <Marks />
    </div>
  );
}
